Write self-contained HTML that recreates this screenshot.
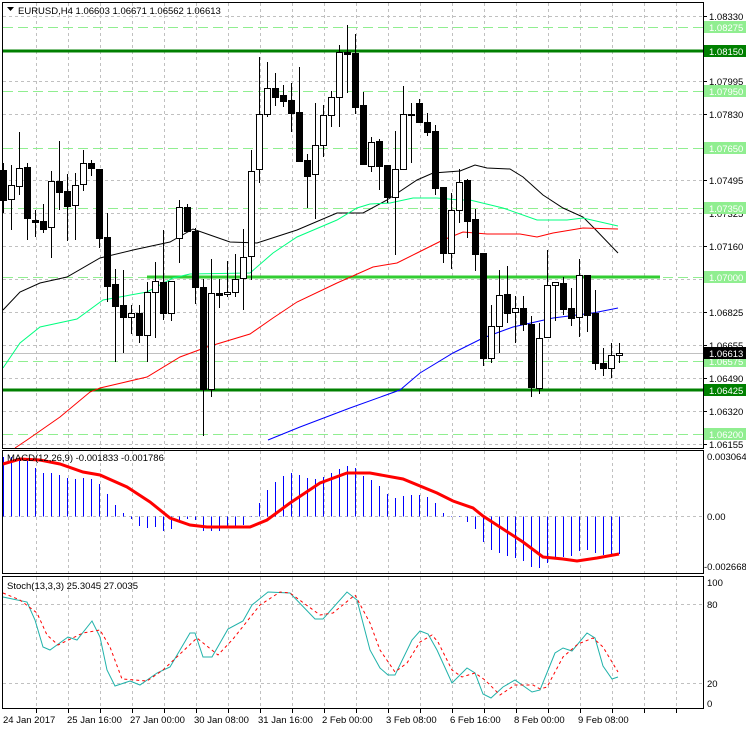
<!DOCTYPE html>
<html><head><meta charset="utf-8">
<style>
html,body{margin:0;padding:0;background:#fff;}
svg{display:block;font-family:"Liberation Sans",sans-serif;}
</style></head>
<body>
<svg id="s" width="746" height="731" viewBox="0 0 746 731" xmlns="http://www.w3.org/2000/svg">
<rect width="746" height="731" fill="#fff"/>
<g id="grid" stroke="#c0c0c0" stroke-dasharray="3,3" stroke-width="1"></g>
<g id="levels"></g>
<g id="mas" fill="none"></g>
<g id="candles"></g>
<g id="macd"></g>
<g id="stoch" fill="none"></g>
<!-- pane borders -->
<g fill="none" stroke="#000" stroke-width="1">
<rect x="2.5" y="2.5" width="701" height="446"/>
<rect x="2.5" y="450.5" width="701" height="123"/>
<rect x="2.5" y="576.5" width="701" height="132"/>
</g>
<g id="axis" font-size="9.5" fill="#000"></g>
<g font-size="9.5" fill="#000">
<path d="M7 7 L14 7 L10.5 11 Z" fill="#000"/>
<text x="18" y="14">EURUSD,H4  1.06603 1.06671 1.06562 1.06613</text>
<text x="7" y="461">MACD(12,26,9) -0.001833 -0.001786</text>
<text x="7" y="589">Stoch(13,3,3) 25.3045 27.0035</text>
<text x="3" y="723">24 Jan 2017</text>
<text x="67" y="723">25 Jan 16:00</text>
<text x="130" y="723">27 Jan 00:00</text>
<text x="194" y="723">30 Jan 08:00</text>
<text x="258" y="723">31 Jan 16:00</text>
<text x="322" y="723">2 Feb 00:00</text>
<text x="386" y="723">3 Feb 08:00</text>
<text x="450" y="723">6 Feb 16:00</text>
<text x="514" y="723">8 Feb 00:00</text>
<text x="578" y="723">9 Feb 08:00</text>
<text x="707" y="460">0.003064</text>
<text x="707" y="520">0.00</text>
<text x="704" y="570">-0.002668</text>
<text x="707" y="586">100</text>
<text x="707" y="608">80</text>
<text x="707" y="687">20</text>
<text x="707" y="707">0</text>
</g>
</svg>
<script>
var NS="http://www.w3.org/2000/svg";
function el(p,t,a,txt){var e=document.createElementNS(NS,t);for(var k in a)e.setAttribute(k,a[k]);if(txt)e.textContent=txt;document.getElementById(p).appendChild(e);return e;}
// grid
var gy=[16,81,114,180,213,246,279,312,345,378,411,444];
gy.forEach(function(y){el("grid","line",{x1:3,x2:703,y1:y+.5,y2:y+.5});});
[516,604,683].forEach(function(y){el("grid","line",{x1:3,x2:703,y1:y+.5,y2:y+.5});});
for(var x=36;x<703;x+=32){
 el("grid","line",{x1:x+.5,x2:x+.5,y1:3,y2:448});
 el("grid","line",{x1:x+.5,x2:x+.5,y1:451,y2:573});
 el("grid","line",{x1:x+.5,x2:x+.5,y1:577,y2:708});
 el("grid","line",{x1:x+.5,x2:x+.5,y1:709,y2:713,"stroke-dasharray":"none",stroke:"#000"});
}
// levels
[27,91,148,208,361,434].forEach(function(y){el("levels","line",{x1:3,x2:703,y1:y+.5,y2:y+.5,stroke:"#90ee90","stroke-dasharray":"10,5"});});
el("levels","line",{x1:3,x2:703,y1:277.5,y2:277.5,stroke:"#90ee90","stroke-dasharray":"10,5"});
el("levels","line",{x1:147,x2:660,y1:277,y2:277,stroke:"#32cd32","stroke-width":3});
el("levels","line",{x1:3,x2:703,y1:51,y2:51,stroke:"#008000","stroke-width":3});
el("levels","line",{x1:3,x2:703,y1:390,y2:390,stroke:"#008000","stroke-width":3});
el("levels","line",{x1:3,x2:703,y1:353.5,y2:353.5,stroke:"#c0c0c0"});
// MAs
function pl(p,pts,col,w,dash){var a={points:pts,stroke:col,"stroke-width":w||1};if(dash)a["stroke-dasharray"]=dash;el(p,"polyline",a);}
pl("mas","3,310 20,292 40,283 67,277 100,258 133,250 170,242 193,229 210,235 230,242 257,243 297,230 337,213 363,213 387,200 417,180 433,173 460,171 475,165 487,168 510,169 523,177 543,195 563,208 583,217 593,227 618,253","#000");
pl("mas","3,368 20,343 40,327 77,319 103,300 147,292 173,278 190,274 250,273 273,253 297,237 337,220 357,208 370,204 390,203 413,198 437,198 460,200 470,200 503,208 537,220 567,220 583,218 618,226","#00ff7f");
pl("mas","15,448 27,440 60,417 90,392 100,388 147,377 180,357 207,347 250,334 273,318 297,302 337,283 373,267 397,263 417,253 443,240 463,232 487,234 520,234 537,237 553,233 583,228 618,229","#ff0000");
pl("mas","268,440 300,427 350,408 400,390 420,373 453,353 483,338 513,327 553,318 593,313 618,308","#0000ff");
// candles
var C=[[170,200,163,213,0],[185,199,165,230,1],[168,186,132,195,1],[167,218,163,240,0],[220,222,210,237,0],[221,229,204,233,0],[181,227,171,258,1],[181,192,141,210,0],[191,206,174,241,0],[185,205,173,240,1],[163,184,150,191,1],[163,168,160,176,0],[169,238,169,248,0],[237,286,213,302,0],[284,306,269,362,0],[305,317,270,353,0],[313,317,305,334,1],[313,335,305,343,0],[292,335,282,362,1],[281,292,262,338,1],[282,313,230,320,0],[281,313,281,321,1],[207,238,200,263,1],[207,231,204,231,0],[231,287,228,304,0],[287,389,279,436,0],[293,389,259,397,1],[293,295,279,308,0],[292,294,261,297,1],[279,292,254,297,1],[257,278,229,310,1],[171,256,150,280,1],[114,169,57,183,1],[88,114,62,117,1],[88,97,73,106,0],[95,101,85,107,0],[100,113,83,132,0],[112,161,67,161,0],[160,176,154,208,0],[145,174,103,219,1],[115,145,105,157,1],[97,115,91,127,1],[52,97,45,127,1],[52,54,25,93,0],[53,107,34,114,0],[105,164,92,164,0],[142,166,137,172,1],[141,166,139,190,0],[165,197,165,203,0],[169,197,131,255,1],[114,169,86,169,1],[114,115,103,163,1],[103,122,99,122,0],[122,132,113,136,0],[131,188,125,195,0],[187,253,187,263,0],[210,253,193,269,1],[182,210,169,223,1],[180,221,179,238,0],[219,254,209,271,0],[253,358,253,366,0],[326,358,305,363,1],[295,326,270,353,1],[294,313,266,323,0],[308,312,296,343,1],[308,324,296,331,0],[324,387,316,397,0],[338,388,323,394,1],[285,337,250,337,1],[282,285,282,321,1],[283,309,277,315,0],[308,318,288,326,0],[275,317,259,337,1],[275,315,275,332,0],[313,363,290,370,0],[363,368,348,376,0],[355,368,343,378,1],[353,355,343,363,1]];
C.forEach(function(c,i){var cx=3.5+8*i;
 el("candles","line",{x1:cx,x2:cx,y1:c[2],y2:c[3],stroke:"#000"});
 var h=Math.max(1,c[1]-c[0]);
 el("candles","rect",{x:cx-3,y:c[0]+.5,width:6,height:h,fill:c[4]?"#fff":"#000",stroke:"#000"});
});
// macd histogram
var H=[457,457,460,461,468,473,473,475,478,479,478,479,484,494,505,513,519,526,528,527,531,529,521,519,520,531,531,531,527,526,525,517,503,490,482,476,473,475,478,479,477,473,469,466,468,476,480,486,494,498,496,495,495,497,503,513,516,517,522,529,542,550,553,556,558,561,567,568,563,558,557,556,551,550,553,555,555,554];
H.forEach(function(t,i){var cx=3.5+8*i;el("macd","line",{x1:cx,x2:cx,y1:516.5,y2:t,stroke:"#0000ff"});});
var sig="3,464 20,459 40,460 60,464 83,472 100,475 127,487 150,502 170,518 190,525 207,527 250,527 267,520 290,503 320,483 347,473 370,473 403,479 437,493 453,501 473,508 483,516 503,529 523,542 543,557 563,559 577,561 597,558 619,554";
el("macd","polyline",{points:sig,fill:"none",stroke:"#ff0000","stroke-width":3});
// stoch
pl("stoch","3,597 27,602 35,620 43,647 50,650 68,637 77,640 92,621 100,637 107,670 115,686 130,681 140,685 157,673 170,667 190,633 195,633 203,657 212,657 228,629 243,621 252,605 268,592 290,593 315,619 323,619 347,592 357,600 370,650 380,668 388,675 395,675 412,640 420,631 428,634 437,650 452,683 467,668 475,673 483,694 491,698 503,687 515,680 532,692 540,690 555,653 563,648 572,651 587,633 595,638 603,666 612,679 618,677","#20b2aa");
pl("stoch","3,593 20,600 37,613 47,635 58,645 83,633 100,630 110,647 122,679 147,681 163,670 197,638 218,655 233,639 260,605 280,592 290,593 320,615 333,613 355,595 370,623 380,650 395,672 407,663 420,642 432,635 438,642 452,670 462,677 475,673 485,680 500,695 515,685 533,685 540,689 547,687 563,657 578,644 593,638 603,647 618,672","#ff0000",1,"3,3");
// right axis labels
var L=[["1.08330",16],["1.07995",81],["1.07830",114],["1.07495",180],["1.07325",213],["1.07160",246],["1.06990",279],["1.06825",312],["1.06655",345],["1.06490",378],["1.06320",411],["1.06155",444]];
L.forEach(function(l){el("axis","line",{x1:703,x2:707,y1:l[1]+.5,y2:l[1]+.5,stroke:"#000"});el("axis","text",{x:709,y:l[1]+4},l[0]);});
var B=[["1.08275",27,"#90ee90"],["1.07950",91,"#90ee90"],["1.07650",148,"#90ee90"],["1.07350",208,"#90ee90"],["1.07000",277,"#90ee90"],["1.06575",361,"#90ee90"],["1.06200",434,"#90ee90"],["1.08150",51,"#008000"],["1.06425",390,"#008000"],["1.06613",353,"#000000"]];
B.forEach(function(b){el("axis","rect",{x:704,y:b[1]-6,width:42,height:12,fill:b[2]});el("axis","text",{x:709,y:b[1]+4,fill:"#fff"},b[0]);});
</script>
</body></html>
